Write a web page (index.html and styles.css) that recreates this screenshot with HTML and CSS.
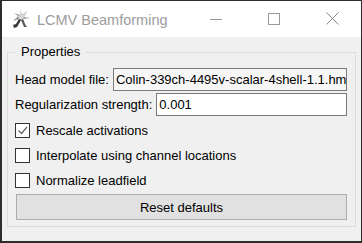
FILE: index.html
```html
<!DOCTYPE html>
<html>
<head>
<meta charset="utf-8">
<link rel="stylesheet" href="styles.css">
</head>
<body>
<div class="window">
  <div class="titlebar">
    <div class="app-icon">
      <svg width="20" height="20" viewBox="0 0 20 20">
        <polygon points="9,1 11,6 16,2 13,8 19,9 12,10 14,15 10,11 6,18 5,16 8,10 2,12 7,7 3,4 9,6" fill="#9a9a9a"/>
        <polygon points="9,1 11,6 16,2 13,8 12,10 10,11 8,10 7,7 9,6" fill="#d6d6d6"/>
        <polygon points="8,10 10,11 6,18 3,19 2,16 5,15" fill="#3a3a3a"/>
        <polygon points="12,10 14,15 16,18 13,18 10,11" fill="#5a5a5a"/>
      </svg>
    </div>
    <div class="title">LCMV Beamforming</div>
    <div class="caption-btns">
      <div class="cap-btn">
        <svg width="12" height="12" viewBox="0 0 12 12"><line x1="0" y1="6.5" x2="12" y2="6.5" stroke="#999" stroke-width="1"/></svg>
      </div>
      <div class="cap-btn">
        <svg width="12" height="12" viewBox="0 0 12 12"><rect x="0.5" y="0.5" width="11" height="11" fill="none" stroke="#999" stroke-width="1"/></svg>
      </div>
      <div class="cap-btn">
        <svg width="13" height="13" viewBox="0 0 13 13"><path d="M0.5 0.5 L12.5 12.5 M12.5 0.5 L0.5 12.5" stroke="#888" stroke-width="1"/></svg>
      </div>
    </div>
  </div>
  <div class="content">
    <fieldset class="group">
      <legend class="group-title">Properties</legend>
      <div class="group-body">
        <div class="field-row">
          <span class="field-label">Head model file:</span>
          <div class="field readonly"><span class="field-text">Colin-339ch-4495v-scalar-4shell-1.1.hm</span></div>
        </div>
        <div class="field-row">
          <span class="field-label">Regularization strength:</span>
          <div class="field"><span class="field-text">0.001</span></div>
        </div>
        <div class="checks">
          <div class="check-row">
            <span class="checkbox">
              <svg width="13" height="13" viewBox="0 0 13 13"><polyline points="2.5,6.5 5.5,9.5 11,3" fill="none" stroke="#666" stroke-width="1.2"/></svg>
            </span>
            <span class="check-label">Rescale activations</span>
          </div>
          <div class="check-row">
            <span class="checkbox"></span>
            <span class="check-label">Interpolate using channel locations</span>
          </div>
          <div class="check-row">
            <span class="checkbox"></span>
            <span class="check-label">Normalize leadfield</span>
          </div>
        </div>
        <div class="button">Reset defaults</div>
      </div>
    </fieldset>
  </div>
</div>
</body>
</html>
```
FILE: styles.css
```css
* { box-sizing: border-box; }
html, body { margin: 0; padding: 0; background: #f0f0f0; }
body { font-family: "Liberation Sans", Arial, sans-serif; font-size: 13px; color: #000; }

.window {
  width: 362px;
  height: 243px;
  border: 1px solid #2d2d2d;
  border-left-width: 2px;
  border-bottom-width: 2px;
  display: flex;
  flex-direction: column;
  background: #f0f0f0;
}

.titlebar {
  height: 36px;
  background: #fff;
  display: flex;
  align-items: center;
  flex: none;
}
.app-icon { width: 20px; height: 20px; margin-left: 9px; display: flex; }
.title {
  margin-left: 6px;
  font-size: 14.5px;
  color: #9c9c9c;
  padding-top: 1px;
}
.caption-btns { margin-left: auto; display: flex; height: 100%; }
.cap-btn {
  width: 58px;
  height: 100%;
  display: flex;
  align-items: center;
  justify-content: center;
  padding-bottom: 1px;
}
.cap-btn svg { display: block; }

.content { flex: 1; padding: 8px 5px 0 5px; min-width: 0; }

.group {
  margin: 0;
  min-width: 0;
  width: 100%;
  border: 1px solid #dcdcdc;
  padding: 9px 8px 6px 7px;
}
.group-title {
  padding: 0 6px;
  line-height: 14px;
  height: 14px;
}

.group-body { display: flex; flex-direction: column; min-width: 0; }

.field-row {
  display: flex;
  align-items: center;
  height: 23px;
  margin-bottom: 2px;
  min-width: 0;
}
.field-label { white-space: nowrap; margin-right: 4px; flex: none; }
.field {
  flex: 1;
  height: 23px;
  border: 1px solid #7a7a7a;
  background: #fff;
  padding: 0 2px;
  display: flex;
  align-items: center;
  overflow: hidden;
  white-space: nowrap;
  min-width: 0;
}
.field.readonly { background: #f7f7f7; }

.checks { display: flex; flex-direction: column; margin-top: 0; }
.check-row {
  display: flex;
  align-items: center;
  height: 25px;
}
.checkbox {
  width: 15px;
  height: 15px;
  border: 1px solid #333;
  background: #fff;
  display: flex;
  align-items: center;
  justify-content: center;
  flex: none;
}
.check-label { margin-left: 6px; }

.button {
  margin-top: 1px;
  margin-left: 1px;
  height: 26px;
  background: #e1e1e1;
  border: 1px solid #adadad;
  display: flex;
  align-items: center;
  justify-content: center;
}
```
